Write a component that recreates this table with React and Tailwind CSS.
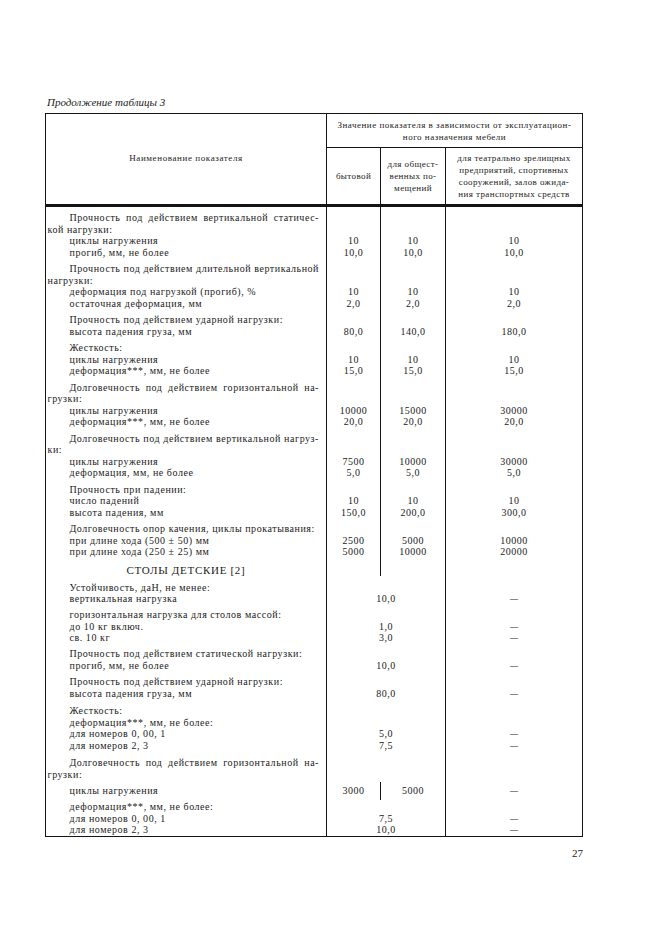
import React from "react";

const F = "font-['Liberation_Serif','Times_New_Roman',serif]";
const LN = "border-[#141414]";
const G = "pt-[5px]";

const rows = [
  { t: "Прочность под действием вертикальной статичес-", i: 1, j: 1, g: "pt-[5px]" },
  { t: "кой нагрузки:" },
  { t: "циклы нагружения", i: 1, v: ["10", "10", "10"] },
  { t: "прогиб, мм, не более", i: 1, v: ["10,0", "10,0", "10,0"] },

  { t: "Прочность под действием длительной вертикальной", i: 1, j: 1, g: G },
  { t: "нагрузки:" },
  { t: "деформация под нагрузкой (прогиб), %", i: 1, v: ["10", "10", "10"] },
  { t: "остаточная деформация, мм", i: 1, v: ["2,0", "2,0", "2,0"] },

  { t: "Прочность под действием ударной нагрузки:", i: 1, g: G },
  { t: "высота падения груза, мм", i: 1, v: ["80,0", "140,0", "180,0"] },

  { t: "Жесткость:", i: 1, g: G },
  { t: "циклы нагружения", i: 1, v: ["10", "10", "10"] },
  { t: "деформация***, мм, не более", i: 1, v: ["15,0", "15,0", "15,0"] },

  { t: "Долговечность под действием горизонтальной на-", i: 1, j: 1, g: G },
  { t: "грузки:" },
  { t: "циклы нагружения", i: 1, v: ["10000", "15000", "30000"] },
  { t: "деформация***, мм, не более", i: 1, v: ["20,0", "20,0", "20,0"] },

  { t: "Долговечность под действием вертикальной нагруз-", i: 1, j: 1, g: G },
  { t: "ки:" },
  { t: "циклы нагружения", i: 1, v: ["7500", "10000", "30000"] },
  { t: "деформация, мм, не более", i: 1, v: ["5,0", "5,0", "5,0"] },

  { t: "Прочность при падении:", i: 1, g: G },
  { t: "число падений", i: 1, v: ["10", "10", "10"] },
  { t: "высота падения, мм", i: 1, v: ["150,0", "200,0", "300,0"] },

  { t: "Долговечность опор качения, циклы прокатывания:", i: 1, g: G },
  { t: "при длине хода (500 ± 50) мм", i: 1, v: ["2500", "5000", "10000"] },
  { t: "при длине хода (250 ± 25) мм", i: 1, v: ["5000", "10000", "20000"] },

  { t: "СТОЛЫ ДЕТСКИЕ [2]", title: 1, g: "pt-[7px]" },

  { t: "Устойчивость, даН, не менее:", i: 1, mg: 1, g: "pt-[5.5px]" },
  { t: "вертикальная нагрузка", i: 1, mg: 1, m: "10,0", d: 1 },

  { t: "горизонтальная нагрузка для столов массой:", i: 1, mg: 1, g: "pt-[4.5px]" },
  { t: "до 10 кг включ.", i: 1, mg: 1, m: "1,0", d: 1 },
  { t: "св. 10 кг", i: 1, mg: 1, m: "3,0", d: 1 },

  { t: "Прочность под действием статической нагрузки:", i: 1, mg: 1, g: "pt-[4.5px]" },
  { t: "прогиб, мм, не более", i: 1, mg: 1, m: "10,0", d: 1 },

  { t: "Прочность под действием ударной нагрузки:", i: 1, mg: 1, g: "pt-[5px]" },
  { t: "высота падения груза, мм", i: 1, mg: 1, m: "80,0", d: 1 },

  { t: "Жесткость:", i: 1, mg: 1, g: "pt-[6px]" },
  { t: "деформация***, мм, не более:", i: 1, mg: 1 },
  { t: "для номеров 0, 00, 1", i: 1, mg: 1, m: "5,0", d: 1 },
  { t: "для номеров 2, 3", i: 1, mg: 1, m: "7,5", d: 1 },

  { t: "Долговечность под действием горизонтальной на-", i: 1, j: 1, mg: 1, g: "pt-[6px]" },
  { t: "грузки:", mg: 1 },

  { t: "циклы нагружения", i: 1, mg: 1, sp: ["3000", "5000"], d: 1, g: "pt-[1.75px]" },

  { t: "деформация***, мм, не более:", i: 1, mg: 1, g: "pt-[1.25px]" },
  { t: "для номеров 0, 00, 1", i: 1, mg: 1, m: "7,5", d: 1 },
  { t: "для номеров 2, 3", i: 1, mg: 1, m: "10,0", d: 1 },
];

function Row({ r }) {
  const g = r.g || "";
  const lead = r.sp ? "leading-[18px]" : "leading-[11.5px]";
  const txt = r.title
    ? "text-center text-[11px] tracking-[0.7px]"
    : `${r.i ? "pl-[23.5px]" : "pl-[1.5px]"} ${
        r.j ? "pr-[7px] text-justify [text-align-last:justify]" : ""
      } whitespace-nowrap`;
  return (
    <div className={`flex ${lead}`}>
      <div className={`w-[281px] shrink-0 border-r ${LN} ${g}`}>
        <div className={txt}>{r.t}</div>
      </div>
      {r.mg ? (
        <>
          <div className={`w-[119px] shrink-0 border-r ${LN} text-center ${g}`}>
            {r.sp ? (
              <div className="flex h-[18px]">
                <div className={`w-[54px] shrink-0 border-r ${LN} text-center`}>{r.sp[0]}</div>
                <div className="flex-1 text-center">{r.sp[1]}</div>
              </div>
            ) : (
              r.m
            )}
          </div>
          <div className={`flex-1 text-center text-[8px] tracking-normal ${g}`}>{r.d ? "—" : null}</div>
        </>
      ) : (
        <>
          <div className={`w-[54px] shrink-0 border-r ${LN} text-center ${g}`}>{r.v ? r.v[0] : null}</div>
          <div className={`w-[65px] shrink-0 border-r ${LN} text-center ${g}`}>{r.v ? r.v[1] : null}</div>
          <div className={`flex-1 text-center ${g}`}>{r.v ? r.v[2] : null}</div>
        </>
      )}
    </div>
  );
}

export default function App() {
  return (
    <div className={`w-[661px] h-[936px] overflow-hidden bg-white text-[#1b1b1b] ${F}`}>
      <div className="pt-[96px] pl-[47px] italic text-[11px] leading-[12px]">
        Продолжение таблицы 3
      </div>
      <div className={`ml-[45px] mt-[5px] w-[538px] border-[1.5px] ${LN}`}>
        <div className={`flex h-[93px] border-b-[3px] ${LN}`}>
          <div
            className={`w-[281px] shrink-0 border-r ${LN} flex items-center justify-center text-[9px] tracking-[0.6px]`}
          >
            Наименование показателя
          </div>
          <div className="flex flex-1 flex-col">
            <div
              className={`h-[34px] shrink-0 border-b ${LN} flex flex-col items-center justify-center text-[9px] leading-[12px] tracking-[0.5px]`}
            >
              <div>Значение показателя в зависимости от эксплуатацион-</div>
              <div>ного назначения мебели</div>
            </div>
            <div className="flex flex-1 text-[9px] leading-[12px] tracking-[0.4px]">
              <div className={`w-[54px] shrink-0 border-r ${LN} flex items-center justify-center`}>
                бытовой
              </div>
              <div className={`w-[65px] shrink-0 border-r ${LN} flex flex-col items-center justify-center`}>
                <div>для общест-</div>
                <div>венных по-</div>
                <div>мещений</div>
              </div>
              <div className="flex flex-1 flex-col items-center justify-center">
                <div>для театрально зрелищных</div>
                <div>предприятий, спортивных</div>
                <div>сооружений, залов ожида-</div>
                <div>ния транспортных средств</div>
              </div>
            </div>
          </div>
        </div>
        <div className="flex flex-col text-[10px] tracking-[0.55px] pb-[0.5px]">
          {rows.map((r, k) => (
            <Row key={k} r={r} />
          ))}
        </div>
      </div>
      <div className="ml-[45px] mt-[10px] w-[538px] text-right text-[11px] leading-[12px]">27</div>
    </div>
  );
}
